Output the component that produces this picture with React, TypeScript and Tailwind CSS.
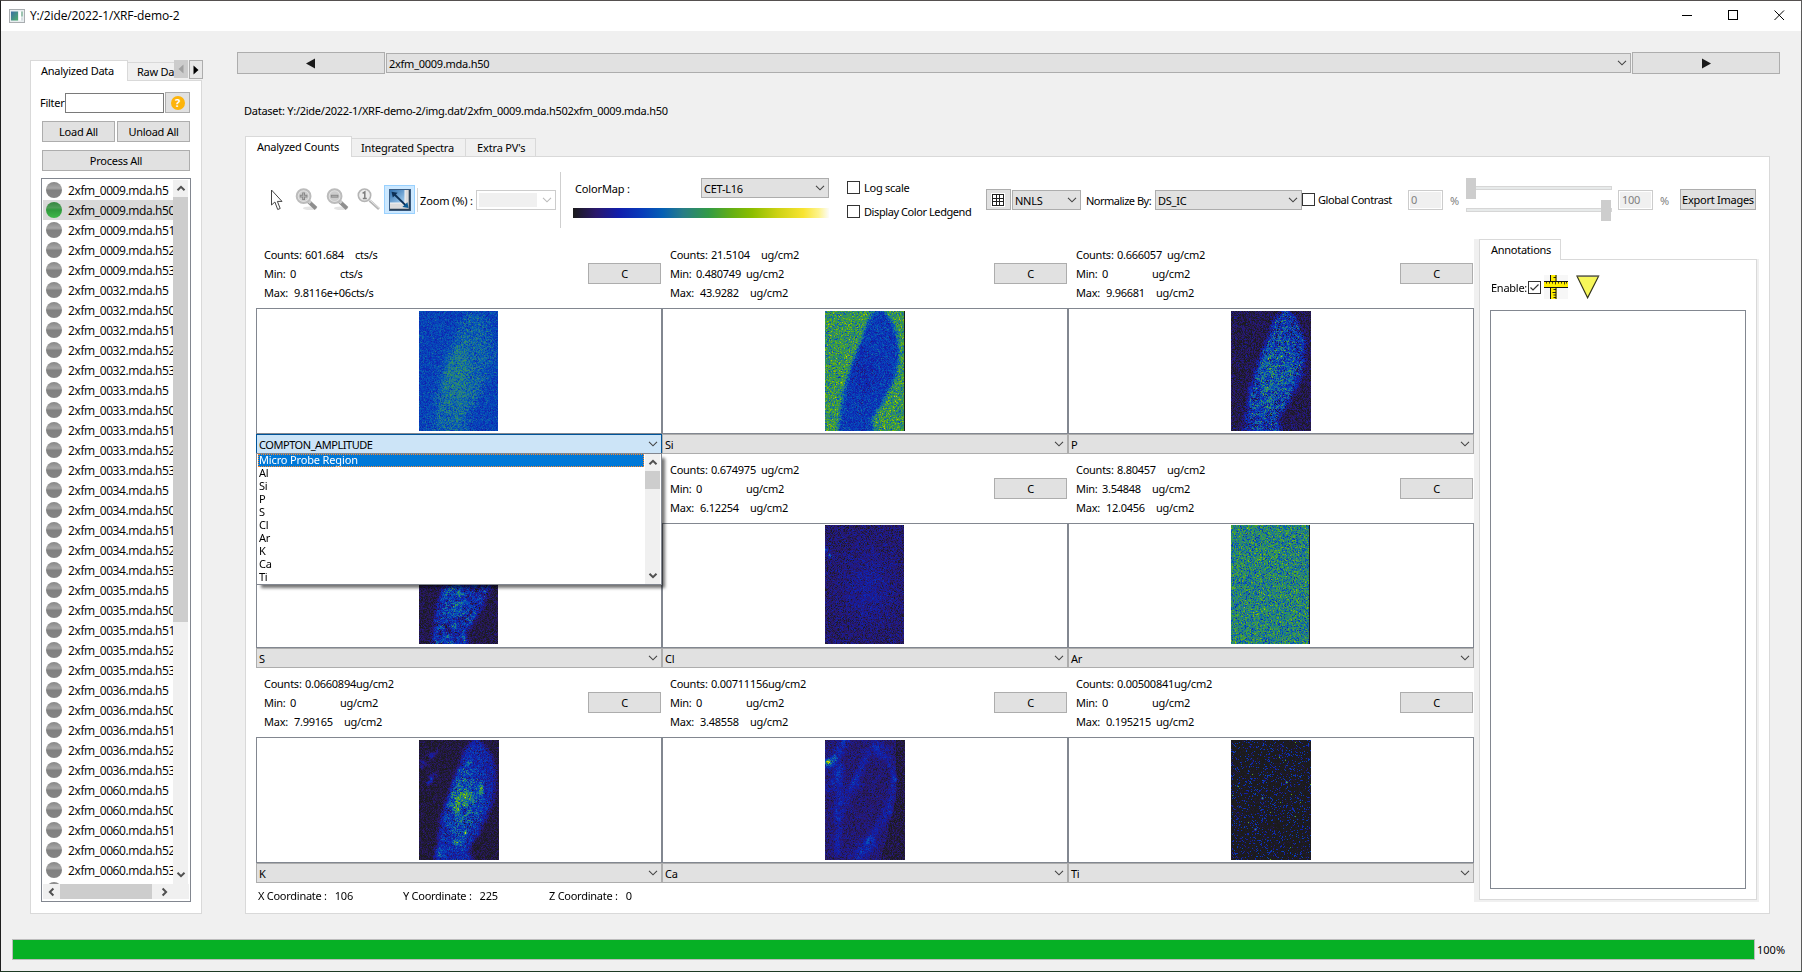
import { useLayoutEffect, useRef, type ReactNode } from "react";

/* ---------- elemental maps ---------- */

const STOPS: [number, number, number, number][] = [
  [0, 27, 27, 27],
  [0.09, 42, 24, 108],
  [0.18, 17, 30, 172],
  [0.27, 8, 60, 186],
  [0.35, 5, 95, 180],
  [0.43, 40, 125, 135],
  [0.53, 50, 155, 70],
  [0.62, 100, 175, 20],
  [0.7, 140, 190, 0],
  [0.8, 205, 210, 20],
  [0.9, 248, 228, 50],
  [0.96, 253, 243, 140],
  [1, 252, 252, 250],
];

function colorAt(v: number): [number, number, number] {
  const t = Math.min(1, Math.max(0, v));
  for (let i = 1; i < STOPS.length; i++) {
    if (t <= STOPS[i][0]) {
      const a = STOPS[i - 1];
      const b = STOPS[i];
      const f = (t - a[0]) / (b[0] - a[0]);
      return [a[1] + (b[1] - a[1]) * f, a[2] + (b[2] - a[2]) * f, a[3] + (b[3] - a[3]) * f];
    }
  }
  return [252, 252, 250];
}

function rng(seed: number) {
  let s = seed >>> 0;
  return () => {
    s = (s + 0x6d2b79f5) >>> 0;
    let t = s;
    t = Math.imul(t ^ (t >>> 15), t | 1);
    t ^= t + Math.imul(t ^ (t >>> 7), t | 61);
    return ((t ^ (t >>> 14)) >>> 0) / 4294967296;
  };
}

const LEFT: [number, number][] = [[0, 50], [10, 42], [25, 37], [40, 31], [60, 24], [80, 18], [100, 15], [120, 12]];
const RIGHT: [number, number][] = [[0, 57], [5, 63], [15, 69], [30, 73], [50, 73], [65, 70], [80, 63], [95, 55], [105, 48], [112, 47], [120, 50]];

function edge(pts: [number, number][], y: number) {
  for (let i = 1; i < pts.length; i++) {
    if (y <= pts[i][0]) {
      const f = (y - pts[i - 1][0]) / (pts[i][0] - pts[i - 1][0]);
      return pts[i - 1][1] + (pts[i][1] - pts[i - 1][1]) * f;
    }
  }
  return pts[pts.length - 1][1];
}

function body(x: number, y: number, soft: number) {
  const d = Math.min(x - edge(LEFT, y), edge(RIGHT, y) - x);
  const t = Math.min(1, Math.max(0, d / soft + 0.5));
  return t * t * (3 - 2 * t);
}

function blob(x: number, y: number, cx: number, cy: number, rx: number, ry: number) {
  const dx = (x - cx) / rx;
  const dy = (y - cy) / ry;
  return Math.exp(-(dx * dx + dy * dy));
}

function seg(x: number, y: number, x1: number, y1: number, x2: number, y2: number, w: number) {
  const l = (x2 - x1) ** 2 + (y2 - y1) ** 2;
  const t = Math.min(1, Math.max(0, ((x - x1) * (x2 - x1) + (y - y1) * (y2 - y1)) / l));
  const d = Math.hypot(x - x1 - t * (x2 - x1), y - y1 - t * (y2 - y1));
  return Math.exp(-(d * d) / (w * w));
}

type Kind = "compton" | "si" | "p" | "s" | "cl" | "ar" | "k" | "ca" | "ti";

function sample(kind: Kind, x: number, y: number, n: number, u: number, p: number) {
  switch (kind) {
    case "compton": {
      const m = body(x, y, 16);
      return 0.28 + n * 0.055 + m * (0.06 + 0.08 * blob(x, y, 36, 66, 18, 40) + p * 0.015) + m * n * 0.015;
    }
    case "si": {
      const m = body(x, y, 8);
      return (0.51 + n * 0.11) * (1 - m) + m * (0.26 + n * 0.065 + p * 0.015 - 0.05 * blob(x, y, 38, 60, 16, 22));
    }
    case "p": {
      const m = body(x, y, 9);
      return 0.055 + n * 0.05 + m * (0.18 + p * 0.07 + n * 0.075 + 0.11 * blob(x, y, 42, 62, 18, 34)) + (m > 0.8 && u > 0.985 ? 0.22 : 0);
    }
    case "s": {
      const m = body(x, y, 9);
      return 0.05 + n * 0.04 + m * (0.16 + n * 0.055 + p * 0.1 + 0.1 * blob(x, y, 36, 74, 12, 24)) + (m > 0.8 && u > 0.98 ? 0.2 : 0);
    }
    case "cl":
      return 0.085 + n * 0.055 + 0.06 * blob(x, y, 44, 62, 26, 36) + (0.3 * blob(x, y, 4, 30, 1.5, 2) + 0.25 * blob(x, y, 1, 24, 1.5, 2)) * u * 1.6;
    case "ar":
      return 0.45 + n * 0.115;
    case "k": {
      const m = body(x - 3, y, 9);
      const core = blob(x, y, 42, 60, 19, 40);
      const hot =
        0.5 * blob(x, y, 62, 49, 1.8, 5) + 0.35 * blob(x, y, 50, 22, 2.5, 1.5) + 0.25 * blob(x, y, 38, 68, 3, 7) +
        0.35 * blob(x, y, 46, 92, 1.8, 2) + 0.3 * blob(x, y, 38, 102, 5, 3) + 0.2 * blob(x, y, 20, 112, 6, 5) + 0.2 * blob(x, y, 46, 56, 12, 8);
      const outside = 0.14 * seg(x, y, 1, 24, 16, 12, 3) + 0.1 * seg(x, y, 5, 46, 15, 34, 3);
      return 0.035 + n * 0.035 + m * (0.13 + n * 0.03) + m * core * (0.16 + p * 0.11 + n * 0.07) + m * hot * (0.35 + u) + outside * (0.5 + p + u * 0.6);
    }
    case "ca": {
      const rim =
        0.13 * seg(x, y, 8, 20, 0, 26, 4) + 0.13 * seg(x, y, 8, 20, 20, 0, 4) + 0.1 * seg(x, y, 50, 5, 56, 14, 5) +
        0.08 * seg(x, y, 42, 12, 30, 42, 4) + 0.06 * seg(x, y, 30, 42, 12, 75, 5) + 0.07 * seg(x, y, 14, 28, 12, 112, 4) +
        0.06 * seg(x, y, 60, 8, 70, 40, 3) + 0.07 * seg(x, y, 69, 40, 62, 72, 4) + 0.07 * seg(x, y, 62, 72, 44, 100, 4) +
        0.11 * seg(x, y, 44, 103, 32, 118, 6) + 0.08 * seg(x, y, 14, 28, 5, 48, 5) + 0.45 * blob(x, y, 3, 22, 3, 3);
      const lowRight = x > 70 || x > 62 - (y - 60) * 0.25 + 8 ? 0.055 : 0;
      return 0.095 + n * 0.045 + rim * (0.45 + u * 0.9 + p * 0.4) - lowRight;
    }
    case "ti":
      return (u > 0.88 ? 0.13 + (u - 0.88) * 1.4 : 0) + (u > 0.998 ? 0.3 : 0) + 0.02 * n + 0.6 * (blob(x, y, 31, 58, 1, 1) + blob(x, y, 24, 89, 1, 1) + blob(x, y, 55, 42, 1, 1));
  }
}

function ElementMap({ kind, w, h, seed }: { kind: Kind; w: number; h: number; seed: number }) {
  const ref = useRef<HTMLCanvasElement>(null);
  useLayoutEffect(() => {
    const ctx = ref.current?.getContext("2d");
    if (!ctx) return;
    const r = rng(seed);
    const img = ctx.createImageData(w, h);
    const gw = Math.ceil(w / 3) + 2;
    const patches = Array.from({ length: gw * (Math.ceil(h / 3) + 2) }, () => r() * 2 - 1);
    const darkEdge = kind === "si" || kind === "ar";
    for (let y = 0; y < h; y++) {
      for (let x = 0; x < w; x++) {
        const n = r() + r() + r() + r() - 2;
        const u = r();
        const gx = Math.floor(x / 3);
        const gy = Math.floor(y / 3);
        const fx = x / 3 - gx;
        const fy = y / 3 - gy;
        const at = (i: number, j: number) => patches[j * gw + i];
        const p =
          1.4 *
          ((at(gx, gy) * (1 - fx) + at(gx + 1, gy) * fx) * (1 - fy) + (at(gx, gy + 1) * (1 - fx) + at(gx + 1, gy + 1) * fx) * fy);
        const v = darkEdge && x === w - 1 ? 0 : sample(kind, x, y, n * 1.5, u, p);
        const c = colorAt(v);
        const i = (y * w + x) * 4;
        img.data[i] = c[0];
        img.data[i + 1] = c[1];
        img.data[i + 2] = c[2];
        img.data[i + 3] = 255;
      }
    }
    ctx.putImageData(img, 0, 0);
  }, [kind, w, h, seed]);
  return <canvas ref={ref} width={w} height={h} className="block" />;
}

/* ---------- small widgets ---------- */

function Chevron({ className = "" }: { className?: string }) {
  return (
    <svg width="10" height="6" viewBox="0 0 10 6" className={"shrink-0 " + className} fill="none" stroke="currentColor" strokeWidth="1.1">
      <path d="M1 0.8 L5 4.8 L9 0.8" />
    </svg>
  );
}

function ScrollArrow({ dir }: { dir: "up" | "down" | "left" | "right" }) {
  const d = {
    up: "M1.5 6.2 L5 2.8 L8.5 6.2",
    down: "M1.5 2.8 L5 6.2 L8.5 2.8",
    left: "M6.4 1.5 L2.9 5 L6.4 8.5",
    right: "M3.6 1.5 L7.1 5 L3.6 8.5",
  }[dir];
  return (
    <svg width="10" height="10" viewBox="0 0 10 10" fill="none" stroke="#505050" strokeWidth="2">
      <path d={d} />
    </svg>
  );
}

function Button({ className = "", children }: { className?: string; children: ReactNode }) {
  return (
    <button className={"flex shrink-0 items-center justify-center border border-[#adadad] bg-[#e1e1e1] whitespace-nowrap " + className}>
      {children}
    </button>
  );
}

function Combo({ className = "", children }: { className?: string; children: ReactNode }) {
  return (
    <div className={"flex h-5 shrink-0 items-center justify-between border border-[#adadad] bg-[#e1e1e1] pr-[3px] pl-[2px] whitespace-nowrap " + className}>
      <span>{children}</span>
      <Chevron className="text-[#444]" />
    </div>
  );
}

function Check({ checked = false, className = "" }: { checked?: boolean; className?: string }) {
  return (
    <span className={"flex size-[13px] shrink-0 items-center justify-center border border-[#333] bg-white " + className}>
      {checked && (
        <svg width="11" height="11" viewBox="0 0 11 11" fill="none" stroke="#333" strokeWidth="1.2">
          <path d="M1.5 5.5 L4 8 L9.5 2.5" />
        </svg>
      )}
    </span>
  );
}

/* ---------- icons ---------- */

function AppIcon() {
  return (
    <svg width="16" height="14" viewBox="0 0 16 14">
      <defs>
        <linearGradient id="app" x1="0" y1="0" x2="1" y2="1">
          <stop offset="0" stopColor="#3a6ea5" />
          <stop offset="1" stopColor="#4fae6a" />
        </linearGradient>
      </defs>
      <rect x="0.5" y="0.5" width="15" height="13" fill="#e9eef0" stroke="#a9adb0" />
      <rect x="2" y="2.5" width="7" height="9" fill="url(#app)" />
      <rect x="10" y="2.5" width="2" height="9" fill="#fff" />
      <rect x="12" y="2.5" width="2" height="5" fill="#9cc4b0" />
      <rect x="12" y="8.5" width="2" height="3" fill="#d6dde0" />
    </svg>
  );
}

function CursorIcon() {
  return (
    <svg width="13" height="22" viewBox="0 0 13 22" fill="#fff" stroke="#444" strokeWidth="1">
      <path d="M1.5 1 V16 L4.9 13 L7.7 20.5 L10.2 19.5 L7.4 12.4 H12 Z" />
    </svg>
  );
}

function Magnifier({ kind }: { kind: "plus" | "minus" | "one" }) {
  if (kind === "one") {
    return (
      <svg width="24" height="23" viewBox="0 0 24 23" fill="none">
        <path d="M12.5 12.5 L22 21" stroke="#b4b4b4" strokeWidth="2.6" />
        <path d="M13 12.2 L22 20.2" stroke="#e6e6e6" strokeWidth="1" />
        <circle cx="7.5" cy="7.2" r="6.2" fill="#ececec" stroke="#b5b5b5" strokeWidth="1.6" />
        <path d="M5.6 5.3 L7.8 3.9 V10.2 M5.8 10.4 H9.8" stroke="#7d7d7d" strokeWidth="1.5" />
      </svg>
    );
  }
  return (
    <svg width="24" height="23" viewBox="0 0 24 23" fill="none">
      <ellipse cx="15" cy="20.2" rx="7" ry="1.8" fill="#e4e4e4" />
      <path d="M13 13 L21 20.5" stroke="#8e8e8e" strokeWidth="3.8" />
      <path d="M13 12.6 L15.5 15" stroke="#cfcfcf" strokeWidth="3" />
      <circle cx="8.6" cy="8.2" r="6.9" fill="#e2e2e2" stroke="#bcbcbc" strokeWidth="2" />
      <circle cx="8.6" cy="8.2" r="5" fill="#cdcdcd" />
      <path d={kind === "plus" ? "M4.8 8.2 H12.4 M8.6 4.4 V12" : "M4.8 8.2 H12.4"} stroke="#848484" strokeWidth="2.8" />
      <path d={kind === "plus" ? "M5.6 8.2 H11.6 M8.6 5.2 V11.2" : "M5.6 8.2 H11.6"} stroke="#b9b9b9" strokeWidth="1" />
    </svg>
  );
}

function FitIcon() {
  return (
    <svg width="22" height="22" viewBox="0 0 22 22">
      <defs>
        <linearGradient id="fit" x1="0" y1="0" x2="1" y2="1">
          <stop offset="0" stopColor="#2f6fae" />
          <stop offset="1" stopColor="#a8d2f2" />
        </linearGradient>
      </defs>
      <rect x="0.5" y="0.5" width="21" height="21" fill="#dcdcdc" stroke="#3b5e86" />
      <rect x="1" y="1" width="15" height="13" fill="url(#fit)" />
      <path d="M16 1 V14 H1" fill="none" stroke="#f5f5f5" strokeWidth="1" />
      <path d="M20.5 1 V20.5 H1" fill="none" stroke="#2c4257" strokeWidth="1.6" />
      <path d="M5 5 L17 16.6" stroke="#0c2f55" strokeWidth="2" />
      <path d="M2.5 2.8 L8.6 3.8 L3.8 8.6 Z" fill="#0c2f55" />
      <path d="M19.6 19 L13.4 18 L18.4 13.2 Z" fill="#0a5a94" />
    </svg>
  );
}

function GridIcon() {
  return (
    <svg width="14" height="14" viewBox="0 0 14 14" className="-ml-px">
      <rect width="14" height="14" fill="#fff" />
      <path d="M1 1.5 H13 M1 5.5 H13 M1 8.5 H13 M1 12.5 H13 M1.5 1 V13 M5.5 1 V13 M8.5 1 V13 M12.5 1 V13" stroke="#222" strokeWidth="1" />
    </svg>
  );
}

function RulerIcon() {
  return (
    <svg width="24" height="24" viewBox="0 0 24 24">
      <rect width="24" height="24" fill="#f7f7f7" />
      <rect x="6.5" y="0" width="6" height="24" fill="#ffee00" />
      <path d="M6.5 0 V24 M12 0 V24" stroke="#111" strokeWidth="1" />
      <path d="M9.5 2.5 H12 M9.5 14.5 H12 M8.5 17.5 H12 M9.5 20 H12 M9.5 22.5 H12" stroke="#111" strokeWidth="0.9" />
      <rect x="0" y="6.5" width="24" height="6" fill="#ffee00" />
      <path d="M0 6.5 H24 M0 12.5 H24" stroke="#111" strokeWidth="1" />
      <path d="M2.5 7 V8.6 M5.5 7 V8.6 M8.5 7 V8.6 M11.5 7 V9.4 M14.5 7 V8.6 M17.5 7 V8.6 M20.5 7 V9.4 M22.5 7 V8.6" stroke="#111" strokeWidth="0.8" />
    </svg>
  );
}

function TriangleIcon() {
  return (
    <svg width="24" height="24" viewBox="0 0 24 24">
      <path d="M1 1.2 H22.6 L11.6 22.8 Z" fill="#f7f75a" stroke="#33331a" strokeWidth="1.2" />
      <path d="M1 0.8 H23" stroke="#8a8a80" strokeWidth="1.2" />
    </svg>
  );
}

/* ---------- left panel ---------- */

const FILES = [
  ...["0009", "0032", "0033", "0034", "0035", "0036", "0060"].flatMap((n) =>
    ["h5", "h50", "h51", "h52", "h53"].map((e) => `2xfm_${n}.mda.${e}`),
  ),
];

function Ball({ on = false }: { on?: boolean }) {
  return (
    <span
      className={
        on
          ? "size-4 shrink-0 rounded-full bg-[linear-gradient(180deg,#35863f_0%,#4f9d58_35%,#2f9a3c_50%,#3fb84a_100%)]"
          : "size-4 shrink-0 rounded-full bg-[linear-gradient(180deg,#868686_0%,#a6a6a6_38%,#808080_52%,#848484_100%)]"
      }
    />
  );
}

function FilePanel() {
  return (
    <div className="flex w-[173px] shrink-0 flex-col pt-[29px]">
      <div className="flex h-5 items-end">
        <div className="relative z-10 -mb-px flex h-[21px] w-[98px] shrink-0 items-center border border-b-0 border-[#d9d9d9] bg-white pb-[2px] pl-[10px]">Analyized Data</div>
        <div className="flex h-[18px] w-[46px] shrink-0 items-center overflow-hidden border-t border-[#d9d9d9] pl-[9px] whitespace-nowrap">Raw Data</div>
        <div className="mb-px flex shrink-0 gap-px self-end">
          <div className="flex h-[18px] w-[14px] items-center justify-center bg-[#cccccc]">
            <svg width="6" height="10" viewBox="0 0 6 10"><path d="M5.5 0.5 V9.5 L0.5 5 Z" fill="#a0a0a0" /></svg>
          </div>
          <div className="flex h-[19px] w-[14px] items-center justify-center border border-[#adadad] bg-[#e8e8e8]">
            <svg width="6" height="10" viewBox="0 0 6 10"><path d="M0.5 0.5 V9.5 L5.5 5 Z" fill="#000" /></svg>
          </div>
        </div>
      </div>
      <div className="flex h-[834px] w-[172px] flex-col border border-[#d9d9d9] bg-white pt-[11px] pl-[10px]">
        <div className="flex h-[21px] items-center">
          <span className="-ml-px w-[25px]">Filter</span>
          <input aria-label="Filter" className="h-5 w-[99px] border border-[#7a7a7a] bg-white" />
          <Button className="ml-px h-[21px] w-[25px]">
            <span className="flex size-[14px] items-center justify-center rounded-full bg-[#fdb40a] text-[11px] font-bold tracking-normal text-white">?</span>
          </Button>
        </div>
        <div className="mt-2 ml-px flex gap-[2px]">
          <Button className="h-[21px] w-[73px]">Load All</Button>
          <Button className="h-[21px] w-[73px]">Unload All</Button>
        </div>
        <Button className="mt-2 ml-px h-[21px] w-[148px]">Process All</Button>
        <div className="mt-[7px] flex h-[724px] w-[150px] flex-col border border-[#828790] p-px">
          <div className="flex h-[704px] shrink-0">
            <div className="w-[130px] shrink-0 overflow-hidden font-['Open_Sans','Noto_Sans',sans-serif] text-[12px] tracking-[-0.38px]">
              {FILES.map((f, i) => (
                <div key={f} className={"flex h-5 items-center gap-[6px] pl-[3px] whitespace-nowrap " + (i === 1 ? "bg-[#d9d9d9]" : "bg-white")}>
                  <Ball on={i === 1} />
                  <span>{f}</span>
                </div>
              ))}
              <div className="flex h-5 items-start pt-[2px] pl-[3px]"><Ball /></div>
            </div>
            <div className="flex w-[15px] flex-col items-center bg-[#f0f0f0]">
              <div className="flex h-[17px] items-center"><ScrollArrow dir="up" /></div>
              <div className="h-[425px] w-full bg-[#cdcdcd]" />
              <div className="mt-auto mb-[4px]"><ScrollArrow dir="down" /></div>
            </div>
          </div>
          <div className="flex h-[15px] items-center bg-[#f0f0f0]">
            <div className="flex w-[17px] justify-center"><ScrollArrow dir="left" /></div>
            <div className="h-full w-[92px] bg-[#cdcdcd]" />
            <div className="flex w-[23px] justify-center"><ScrollArrow dir="right" /></div>
          </div>
        </div>
      </div>
    </div>
  );
}

/* ---------- toolbar ---------- */

function Toolbar() {
  return (
    <div className="flex h-[82px] shrink-0 items-start pl-[24px]">
      <div className="mt-[32px] w-[25px]"><CursorIcon /></div>
      <div className="mt-[31px] w-[31px]"><Magnifier kind="plus" /></div>
      <div className="mt-[31px] w-[31px]"><Magnifier kind="minus" /></div>
      <div className="mt-[31px] w-[27px]"><Magnifier kind="one" /></div>
      <div className="mt-[28px] flex h-[29px] w-[31px] items-center justify-center border border-[#99d1ff] bg-[#cce8ff]"><FitIcon /></div>
      <div className="mt-[31px] ml-[2px] h-6 w-px bg-[#d5d5d5]" />
      <div className="mt-[33px] ml-[2px] flex h-5 w-[56px] items-center tracking-[-0.15px] whitespace-nowrap">Zoom (%) :</div>
      <div className="mt-[33px] flex h-5 w-20 items-center justify-between border border-[#cccccc] bg-white pr-[3px] pl-[2px]">
        <div className="h-[14px] w-[58px] bg-[#f0f0f0]" />
        <Chevron className="text-[#bbb]" />
      </div>
      <div className="mt-[15px] ml-[4px] h-14 w-px bg-[#cfcfcf]" />
      <div className="mt-[21px] ml-[12px] w-64">
        <div className="flex h-5 items-center justify-between">
          <span className="pl-[2px] tracking-[-0.15px]">ColorMap :</span>
          <Combo className="w-32">CET-L16</Combo>
        </div>
        <div className="mt-[10px] h-[10px] w-64 bg-[linear-gradient(90deg,#1b1b1b_0%,#2a186c_9%,#111eac_18%,#083cba_27%,#055fb4_35%,#287d87_43%,#329b46_53%,#64af14_62%,#8cbe00_70%,#cdd214_80%,#f8e432_90%,#fdf38c_96%,#fcfcfa_100%)]" />
      </div>
      <div className="mt-[23px] ml-[18px] flex w-[139px] flex-col gap-[9px] tracking-[-0.42px]">
        <div className="flex h-[15px] items-center gap-1 tracking-[-0.25px] whitespace-nowrap"><Check /> Log scale</div>
        <div className="flex h-[15px] items-center gap-1 whitespace-nowrap"><Check /> Display Color Ledgend</div>
      </div>
      <Button className="mt-[32px] h-[21px] w-[25px]"><GridIcon /></Button>
      <Combo className="mt-[33px] ml-px w-[69px]">NNLS</Combo>
      <div className="mt-[33px] ml-[5px] flex h-5 w-[69px] items-center tracking-[-0.5px] whitespace-nowrap">Normalize By:</div>
      <Combo className="mt-[33px] w-[147px]">DS_IC</Combo>
      <div className="mt-[32px] flex h-5 w-[106px] items-center gap-[3px] tracking-[-0.43px] whitespace-nowrap"><Check /> Global Contrast</div>
      <div className="mt-[33px] flex h-5 w-[35px] items-center border border-[#cccccc] bg-white p-px text-[#808080]">
        <span className="h-4 w-full bg-[#f0f0f0] pl-px leading-4">0</span>
      </div>
      <div className="mt-[33px] flex h-5 w-[23px] items-center justify-center text-[#808080]">%</div>
      <div className="mt-[21px] flex w-[146px] flex-col gap-px">
        <div className="flex h-[21px] items-center">
          <span className="h-[21px] w-[10px] bg-[#cdcdcd]" />
          <span className="-mt-[2px] h-1 flex-1 border border-l-0 border-[#d6d6d6] bg-[#e7eaea]" />
        </div>
        <div className="flex h-[21px] items-center">
          <span className="-mt-[2px] h-1 flex-1 border border-r-0 border-[#d6d6d6] bg-[#e7eaea]" />
          <span className="h-[21px] w-[10px] bg-[#cdcdcd]" />
          <span className="-mt-[2px] h-1 w-px bg-[#d6d6d6]" />
        </div>
      </div>
      <div className="mt-[33px] ml-[6px] flex h-5 w-[35px] items-center border border-[#cccccc] bg-white p-px text-[#808080]">
        <span className="h-4 w-full bg-[#f0f0f0] pl-[2px] leading-4">100</span>
      </div>
      <div className="mt-[33px] flex h-5 w-[23px] items-center justify-center text-[#808080]">%</div>
      <Button className="mt-[32px] ml-1 h-[21px] w-[76px]">Export Images</Button>
    </div>
  );
}

/* ---------- map cells ---------- */

type Cell = {
  name: string;
  kind: Kind;
  w: number;
  stats?: { unit: string; counts: string; min: string; max: string };
};

const UG = "ug/cm2";

const ROWS: Cell[][] = [
  [
    { name: "COMPTON_AMPLITUDE", kind: "compton", w: 79, stats: { unit: "cts/s", counts: "601.684", min: "0", max: "9.8116e+06" } },
    { name: "Si", kind: "si", w: 80, stats: { unit: UG, counts: "21.5104", min: "0.480749", max: "43.9282" } },
    { name: "P", kind: "p", w: 80, stats: { unit: UG, counts: "0.666057", min: "0", max: "9.96681" } },
  ],
  [
    { name: "S", kind: "s", w: 79 },
    { name: "Cl", kind: "cl", w: 79, stats: { unit: UG, counts: "0.674975", min: "0", max: "6.12254" } },
    { name: "Ar", kind: "ar", w: 79, stats: { unit: UG, counts: "8.80457", min: "3.54848", max: "12.0456" } },
  ],
  [
    { name: "K", kind: "k", w: 80, stats: { unit: UG, counts: "0.0660894", min: "0", max: "7.99165" } },
    { name: "Ca", kind: "ca", w: 80, stats: { unit: UG, counts: "0.00711156", min: "0", max: "3.48558" } },
    { name: "Ti", kind: "ti", w: 80, stats: { unit: UG, counts: "0.00500841", min: "0", max: "0.195215" } },
  ],
];

const OPTIONS = ["Micro Probe Region", "Al", "Si", "P", "S", "Cl", "Ar", "K", "Ca", "Ti"];

function Stat({ label, value, unit, labelWidth }: { label: string; value: string; unit: string; labelWidth: string }) {
  return (
    <div className="flex h-[19px] items-center whitespace-nowrap">
      <span className={"shrink-0 " + labelWidth}>{label}</span>
      <span className="min-w-[50px]">{value}</span>
      <span>{unit}</span>
    </div>
  );
}

function Popup() {
  return (
    <div className="absolute top-[18px] -left-px z-20 flex h-[132px] w-[406px] border border-[#828790] bg-white pl-px shadow-[4px_4px_3px_-1px_rgba(0,0,0,0.55)]">
      <div className="flex-1">
        {OPTIONS.map((o, i) => (
          <div
            key={o}
            className={
              i === 0
                ? "h-[13px] bg-[#0078d7] pl-px leading-[12px] tracking-[-0.15px] text-white outline-1 -outline-offset-1 outline-dotted outline-[#ff8728]"
                : "h-[13px] pl-px leading-[12px]"
            }
          >
            {o}
          </div>
        ))}
      </div>
      <div className="ml-px flex h-[130px] w-[16px] flex-col items-center border-r border-white bg-[#f0f0f0]">
        <div className="flex h-[17px] items-center"><ScrollArrow dir="up" /></div>
        <div className="h-[18px] w-full bg-[#cdcdcd]" />
        <div className="mt-auto mb-[3px]"><ScrollArrow dir="down" /></div>
      </div>
    </div>
  );
}

function MapCell({ cell, row, col }: { cell: Cell; row: number; col: number }) {
  const open = row === 0 && col === 0;
  const s = cell.stats;
  return (
    <div className="flex w-[406px] flex-col">
      <div className="flex h-[69px] shrink-0 justify-between pt-[6px] pr-px pl-[8px]">
        {s && (
          <>
            <div className="flex flex-col">
              <Stat label="Counts:" value={s.counts} unit={s.unit} labelWidth="w-[41px]" />
              <Stat label="Min:" value={s.min} unit={s.unit} labelWidth="w-[26px]" />
              <Stat label="Max:" value={s.max} unit={s.unit} labelWidth="w-[30px]" />
            </div>
            <Button className="mt-[18px] h-[21px] w-[73px]">C</Button>
          </>
        )}
      </div>
      <div className={"flex shrink-0 items-start border border-[#828790] bg-white pl-[162px] " + (row === 1 ? "h-[125px] pt-px" : "h-[126px] pt-[2px]")}>
        <ElementMap kind={cell.kind} w={cell.w} h={row === 1 ? 119 : 120} seed={row * 31 + col * 7 + 5} />
      </div>
      {open ? (
        <div className="relative flex h-5 shrink-0 items-center justify-between border border-[#005499] bg-[#cce4f7] pr-[3px] pl-[2px]">
          <span className="tracking-[-0.45px]">{cell.name}</span>
          <Chevron className="text-[#444]" />
          <Popup />
        </div>
      ) : (
        <Combo>{cell.name}</Combo>
      )}
    </div>
  );
}

/* ---------- main ---------- */

function Annotations() {
  return (
    <div className="flex h-[663px] w-[285px] shrink-0 bg-[#f0f0f0]">
      <div className="w-[5px] shrink-0" />
      <div className="flex w-[280px] flex-col">
        <div className="flex h-5 shrink-0 bg-white">
          <div className="relative z-10 -mb-px flex h-[21px] w-[82px] items-center border border-b-0 border-[#d9d9d9] bg-white pb-[2px] pl-[11px]">Annotations</div>
        </div>
        <div className="h-[641px] w-[278px] shrink-0 border border-[#d9d9d9] bg-white pl-[10px]">
          <div className="flex h-[50px] items-center pt-[4px]">
            <span className="w-[38px] pl-px">Enable:</span>
            <Check checked />
            <span className="ml-[3px]"><RulerIcon /></span>
            <span className="ml-2"><TriangleIcon /></span>
          </div>
          <div className="h-[579px] w-[256px] border border-[#828790] bg-white" />
        </div>
      </div>
    </div>
  );
}

function MainPanel() {
  return (
    <div className="ml-[34px] flex w-[1543px] shrink-0 flex-col pt-[21px]">
      <div className="flex h-[22px] items-center gap-px">
        <Button className="h-[22px] w-[148px]">
          <svg width="9" height="11" viewBox="0 0 9 11" className="-ml-[2px]"><path d="M9 0.5 V10.5 L0 5.5 Z" fill="#1a1a1a" /></svg>
        </Button>
        <Combo className="w-[1245px]">2xfm_0009.mda.h50</Combo>
        <Button className="h-[22px] w-[148px]">
          <svg width="9" height="11" viewBox="0 0 9 11"><path d="M0 0.5 V10.5 L9 5.5 Z" fill="#1a1a1a" /></svg>
        </Button>
      </div>
      <div className="mt-[26px] flex h-5 items-center pl-[7px] whitespace-nowrap">
        Dataset: Y:/2ide/2022-1/XRF-demo-2/img.dat/2xfm_0009.mda.h502xfm_0009.mda.h50
      </div>
      <div className="mt-[16px] ml-2 flex h-5 items-end">
        <div className="relative z-10 -mb-px flex h-[21px] w-[107px] items-center border border-b-0 border-[#d9d9d9] bg-white pb-[2px] pl-[11px]">Analyzed Counts</div>
        <div className="flex h-[18px] w-[114px] items-center border-t border-r border-[#d9d9d9] pl-[9px] tracking-[-0.2px]">Integrated Spectra</div>
        <div className="flex h-[18px] w-[70px] items-center border-t border-r border-[#d9d9d9] pl-[11px] tracking-[-0.15px]">Extra PV's</div>
      </div>
      <div className="ml-2 flex h-[758px] w-[1525px] flex-col border border-[#d9d9d9] bg-white">
        <Toolbar />
        <div className="flex pl-[10px]">
          <div className="flex w-[1218px] flex-col">
            {ROWS.map((r, i) => (
              <div key={i} className="flex">
                {r.map((c, j) => (
                  <MapCell key={c.name} cell={c} row={i} col={j} />
                ))}
              </div>
            ))}
            <div className="flex h-[24px] items-center pl-[2px] whitespace-pre">
              <span className="w-[145px]">{"X Coordinate :"}<span className="ml-[8px]">106</span></span>
              <span className="w-[146px]">{"Y Coordinate :"}<span className="ml-[8px]">225</span></span>
              <span>{"Z Coordinate :"}<span className="ml-[8px]">0</span></span>
            </div>
          </div>
          <Annotations />
        </div>
      </div>
    </div>
  );
}

export default function App() {
  return (
    <div className="flex h-[972px] w-[1802px] flex-col overflow-hidden border border-t-[#55504f] border-r-[#5a5a5a] border-b-[#1d3a24] border-l-[#1e1e1e] bg-[#f0f0f0] font-['Noto_Sans','Open_Sans',sans-serif] text-[11px] leading-[15px] tracking-[-0.26px] text-black">
      <div className="flex h-[30px] shrink-0 items-center bg-white pl-2">
        <AppIcon />
        <span className="-mt-px ml-[5px] font-['Open_Sans','Noto_Sans',sans-serif] text-[12px] tracking-[-0.13px]">Y:/2ide/2022-1/XRF-demo-2</span>
        <div className="-mt-px ml-auto flex items-center gap-[35px] pr-[16px]">
          <svg width="11" height="11" viewBox="0 0 11 11"><path d="M0 5.5 H10" stroke="#000" /></svg>
          <svg width="11" height="11" viewBox="0 0 11 11"><rect x="0.5" y="0.5" width="9" height="9" fill="none" stroke="#000" /></svg>
          <svg width="11" height="11" viewBox="0 0 11 11"><path d="M0.5 0.5 L10 10 M10 0.5 L0.5 10" stroke="#000" /></svg>
        </div>
      </div>
      <div className="flex pl-[29px]">
        <FilePanel />
        <MainPanel />
      </div>
      <div className="mt-[25px] flex h-[21px] shrink-0 items-center pl-[11px]">
        <div className="h-[21px] w-[1743px] border border-[#bcbcbc] bg-[#06b025]" />
        <span className="ml-[2px] tracking-[0px]">100%</span>
      </div>
    </div>
  );
}
